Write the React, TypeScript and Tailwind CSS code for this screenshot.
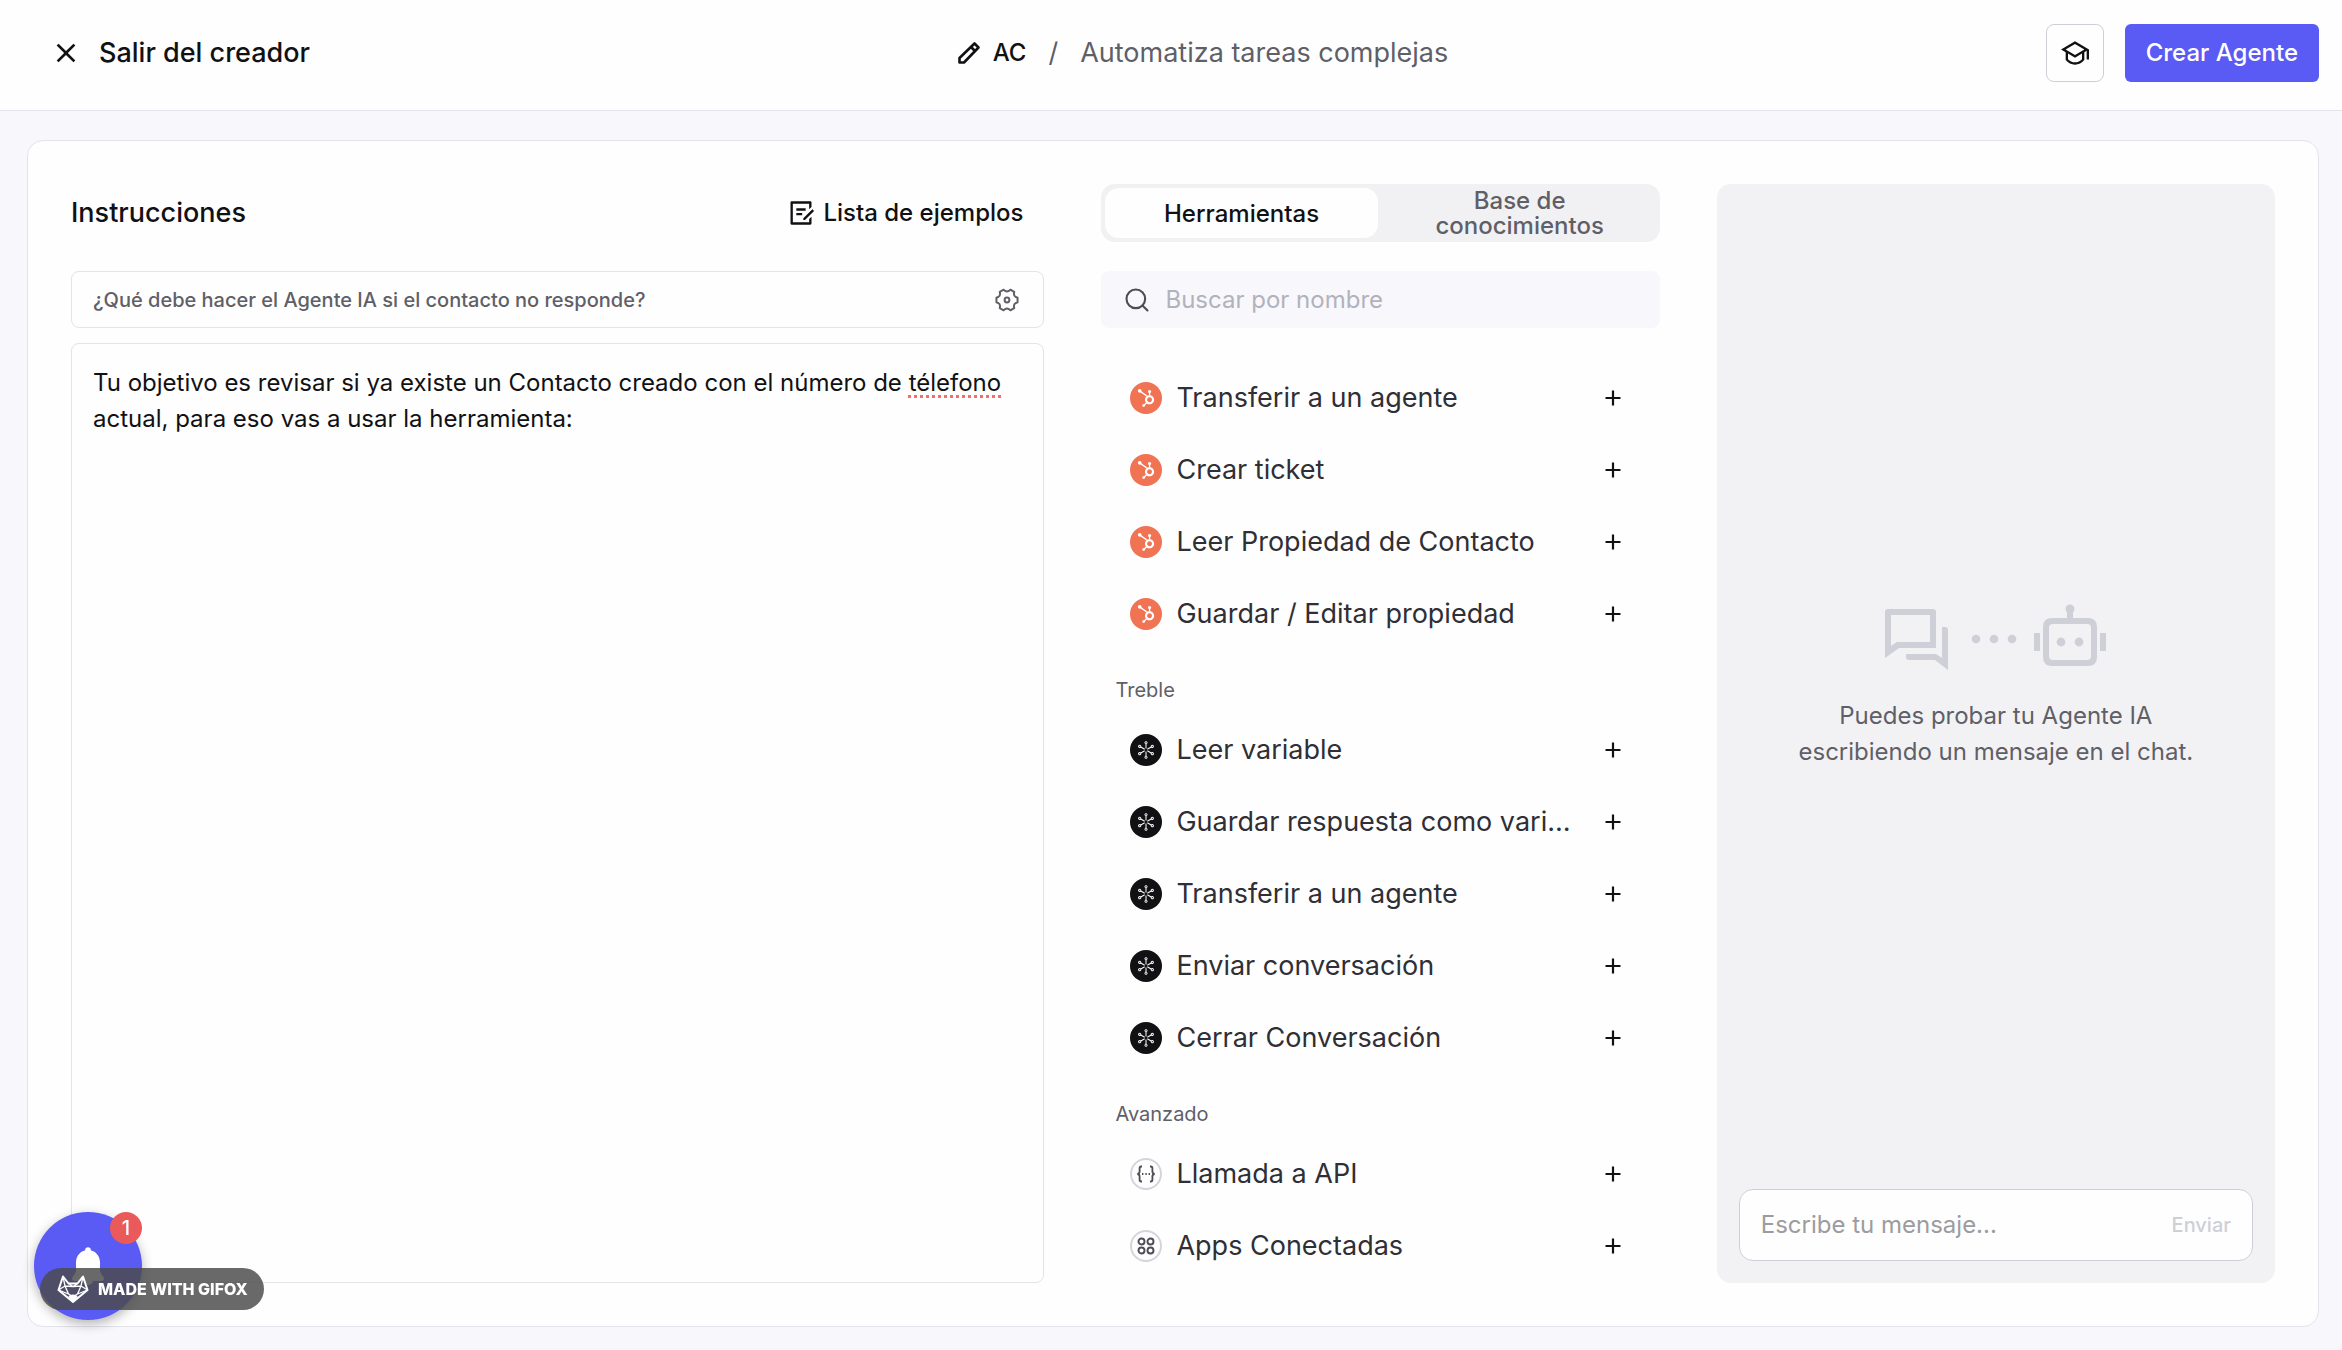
import { useState } from "react";
import type { ReactNode } from "react";
import { FaHubspot } from "react-icons/fa";
import { MdClose } from "react-icons/md";
import { RiGraduationCapLine, RiDraftLine } from "react-icons/ri";
import { Search } from "lucide-react";

const polar = (degrees: number, radius: number) => {
  const radians = (degrees * Math.PI) / 180;
  return `${(12 + radius * Math.cos(radians)).toFixed(2)} ${(12 + radius * Math.sin(radians)).toFixed(2)}`;
};

const GEAR_PATH =
  [0, 60, 120, 180, 240, 300]
    .map(
      (angle, index) =>
        `${index === 0 ? "M" : "L"}${polar(angle - 12, 10.8)}L${polar(angle + 12, 10.8)}L${polar(angle + 19, 9.2)}Q${polar(angle + 30, 8)} ${polar(angle + 41, 9.2)}`,
    )
    .join("") + "Z";

function GearIcon() {
  return (
    <svg viewBox="0 0 24 24" className="size-6" fill="none" stroke="currentColor" strokeWidth="2" strokeLinejoin="round">
      <path d={GEAR_PATH} />
      <circle cx="12" cy="12" r="2.4" />
    </svg>
  );
}

function PencilIcon() {
  return (
    <svg viewBox="0 0 24 24" className="size-6" fill="none" stroke="currentColor" strokeWidth="2.6" strokeLinejoin="round">
      <path d="M2.500 21.500V17L17.500 2.500L21.500 6.500L7 21.500Z" />
      <path d="M14 6L18 10" />
    </svg>
  );
}

function HubspotBadge() {
  return (
    <span className="flex size-8 shrink-0 items-center justify-center rounded-full bg-[#f07354] text-white">
      <FaHubspot className="size-[18px]" />
    </span>
  );
}

function TrebleBadge() {
  return (
    <span className="flex size-8 shrink-0 items-center justify-center rounded-full bg-[#111114] text-white">
      <svg viewBox="0 0 32 32" className="size-8" fill="none" stroke="currentColor" strokeWidth="1">
        {[0, 60, 120, 180, 240, 300].map((angle) => (
          <g key={angle} transform={`rotate(${angle} 16 16)`}>
            <path d="M16 14.5V10" />
            <circle cx="16" cy="8.7" r="1.1" />
          </g>
        ))}
      </svg>
    </span>
  );
}

function ApiBadge() {
  return (
    <span className="flex size-8 shrink-0 items-center justify-center rounded-full border-2 border-[#d4d4dc] text-[#4c4c55]">
      <svg viewBox="0 0 20 18" className="h-[18px] w-5" fill="none" stroke="currentColor" strokeWidth="1.8">
        <path d="M6 1.5H5.2Q3.6 1.5 3.6 3.2V6.6Q3.6 8.6 1.4 9Q3.6 9.4 3.6 11.4V14.8Q3.6 16.5 5.2 16.5H6" />
        <path d="M14 1.5H14.8Q16.4 1.5 16.4 3.2V6.6Q16.4 8.6 18.6 9Q16.4 9.4 16.4 11.4V14.8Q16.4 16.5 14.8 16.5H14" />
        <path d="M6 9H14" strokeDasharray="1.4 1.9" />
      </svg>
    </span>
  );
}

function AppsBadge() {
  return (
    <span className="flex size-8 shrink-0 items-center justify-center rounded-full border-2 border-[#d4d4dc] text-[#4c4c55]">
      <svg viewBox="0 0 18 18" className="size-[18px]" fill="none" stroke="currentColor" strokeWidth="1.9">
        <circle cx="4.5" cy="4.5" r="3" />
        <circle cx="13.5" cy="4.5" r="3" />
        <circle cx="4.5" cy="13.5" r="3" />
        <circle cx="13.5" cy="13.5" r="3" />
      </svg>
    </span>
  );
}

function ChatToBotIllustration() {
  return (
    <svg viewBox="0 0 222 66" className="h-[66px] w-[222px] text-[#cfcfd8]" fill="currentColor">
      <path
        fillRule="evenodd"
        d="M3 5H48Q51 5 51 8V44H14L0 54V8Q0 5 3 5ZM6 11V42L12 38H45V11Z"
      />
      <path d="M57 23H60Q63 23 63 26V66L50 56H24Q21 56 21 53V50H51L57 54Z" />
      <circle cx="91" cy="35" r="4.3" />
      <circle cx="109" cy="35" r="4.3" />
      <circle cx="127" cy="35" r="4.3" />
      <circle cx="185" cy="5" r="4.5" />
      <rect x="182" y="6" width="6" height="10" />
      <path
        fillRule="evenodd"
        d="M167 14H203Q212 14 212 23V53Q212 62 203 62H167Q158 62 158 53V23Q158 14 167 14ZM168 20Q164 20 164 24V52Q164 56 168 56H202Q206 56 206 52V24Q206 20 202 20Z"
      />
      <circle cx="176" cy="38" r="4.4" />
      <circle cx="194" cy="38" r="4.4" />
      <rect x="149" y="29" width="6" height="18" />
      <rect x="215" y="29" width="6" height="18" />
    </svg>
  );
}

function BellIcon() {
  return (
    <svg viewBox="0 0 34 38" className="h-[38px] w-[34px]" fill="currentColor">
      <circle cx="17" cy="3" r="2.8" />
      <path d="M17 3C24 3 29 8.500 29 15.500V24Q29.500 27 32.500 30Q34 33.500 30.500 34H3.500Q0 33.500 1.500 30Q4.500 27 5 24V15.500C5 8.500 10 3 17 3Z" />
      <path d="M12 34H22Q21 38 17 38Q13 38 12 34Z" />
    </svg>
  );
}

function FoxIcon() {
  return (
    <svg viewBox="0 0 32 28" className="h-7 w-8" fill="none" stroke="currentColor" strokeWidth="2" strokeLinejoin="round">
      <path d="M6 1.500L11.500 8.500H20.500L26 1.500L30.500 15L16 27L1.500 15Z" />
      <path d="M11.500 8.500L16 11.500L20.500 8.500M6 1.500L8 11L1.500 15L11.500 19L8 11L16 11.500L24 11L20.500 19L30.500 15L24 11L26 1.500M11.500 19L16 21.500L20.500 19" strokeWidth="1.300" />
      <path d="M12.500 21.500L16 20.500L19.500 21.500L16 26Z" fill="currentColor" />
    </svg>
  );
}

type Tool = { name: string; badge: ReactNode };
type ToolGroup = { title?: string; tools: Tool[] };

const GROUPS: ToolGroup[] = [
  {
    tools: ["Transferir a un agente", "Crear ticket", "Leer Propiedad de Contacto", "Guardar / Editar propiedad"].map(
      (name) => ({ name, badge: <HubspotBadge /> }),
    ),
  },
  {
    title: "Treble",
    tools: [
      "Leer variable",
      "Guardar respuesta como variable",
      "Transferir a un agente",
      "Enviar conversación",
      "Cerrar Conversación",
    ].map((name) => ({ name, badge: <TrebleBadge /> })),
  },
  {
    title: "Avanzado",
    tools: [
      { name: "Llamada a API", badge: <ApiBadge /> },
      { name: "Apps Conectadas", badge: <AppsBadge /> },
    ],
  },
];

function ToolRow({ name, badge }: Tool) {
  return (
    <li className="flex h-[72px] items-center pr-[35px] pl-[29px]">
      {badge}
      <span className="ml-[14px] min-w-0 flex-1 truncate text-[27px] text-[#2f2f35]">{name}</span>
      <button type="button" aria-label={`Agregar ${name}`} className="ml-5 flex size-6 items-center justify-center text-[#111114]">
        <svg viewBox="0 0 16 16" className="size-4" stroke="currentColor" strokeWidth="2.2">
          <path d="M8 0.500V15.500M0.500 8H15.500" />
        </svg>
      </button>
    </li>
  );
}

function Header() {
  return (
    <header className="grid h-[111px] grid-cols-[1fr_auto_1fr] items-center border-b border-[#e3e3ec] bg-[#fefefe] pr-[23px] pb-1 pl-[50px]">
      <button type="button" className="flex items-center gap-[17px] justify-self-start text-[27px] font-medium text-[#111114]">
        <MdClose className="size-8" />
        Salir del creador
      </button>
      <div className="flex items-center pl-9 text-[27px] text-[#5f5f68]">
        <button type="button" className="flex items-center gap-3 text-2xl font-medium text-[#111114]">
          <PencilIcon />
          AC
        </button>
        <span className="mx-[22px]">/</span>
        <span>Automatiza tareas complejas</span>
      </div>
      <div className="flex items-center gap-[21px] justify-self-end">
        <button
          type="button"
          aria-label="Tutoriales"
          className="flex size-[58px] items-center justify-center rounded-lg border border-[#cfcfd8] text-[#111114]"
        >
          <RiGraduationCapLine className="size-7" />
        </button>
        <button type="button" className="h-[58px] rounded-md bg-[#5a5af5] px-[21px] text-2xl font-medium text-white">
          Crear Agente
        </button>
      </div>
    </header>
  );
}

function Instructions() {
  return (
    <section className="flex min-w-0 flex-col">
      <div className="flex h-[58px] items-center justify-between pr-[21px] text-[#111114]">
        <h2 className="text-[27px] font-medium">Instrucciones</h2>
        <button type="button" className="flex items-center gap-2 text-2xl font-medium">
          <RiDraftLine className="size-7" />
          Lista de ejemplos
        </button>
      </div>
      <div className="mt-[29px] flex h-[57px] items-center justify-between rounded-lg border border-[#e3e3e8] pr-6 pl-[21px] text-[#5f5f68]">
        <span className="truncate text-xl font-medium">¿Qué debe hacer el Agente IA si el contacto no responde?</span>
        <button type="button" aria-label="Configuración">
          <GearIcon />
        </button>
      </div>
      <div
        role="textbox"
        aria-multiline="true"
        aria-label="Instrucciones"
        contentEditable
        suppressContentEditableWarning
        spellCheck={false}
        className="mt-[15px] flex-1 rounded-lg border border-[#e3e3e8] px-[21px] py-[21px] text-2xl/9 text-[#111114] outline-none"
      >
        Tu objetivo es revisar si ya existe un Contacto creado con el número de{" "}
        <span className="underline decoration-[#f07070] decoration-dotted decoration-[3px] underline-offset-4">télefono</span>{" "}
        actual, para eso vas a usar la herramienta:
      </div>
    </section>
  );
}

function Tools() {
  const [query, setQuery] = useState("");
  return (
    <section className="flex min-w-0 flex-col">
      <div role="tablist" className="grid h-[58px] grid-cols-2 gap-1.5 rounded-[14px] bg-[#f1f1f4] p-1 text-2xl/[25px] font-medium">
        <button type="button" role="tab" aria-selected="true" className="rounded-[14px] bg-[#fefefe] text-[#111114]">
          Herramientas
        </button>
        <button type="button" role="tab" aria-selected="false" className="-my-1 px-12 text-[#5f5f68]">
          Base de conocimientos
        </button>
      </div>
      <div className="mt-[29px] flex h-[57px] items-center rounded-lg bg-[#f8f8fc] px-[22px] text-[#4c4c55]">
        <Search className="size-7" strokeWidth={1.8} />
        <input
          type="text"
          aria-label="Buscar por nombre"
          value={query}
          onChange={(event) => setQuery(event.target.value)}
          placeholder="Buscar por nombre"
          className="ml-[14px] min-w-0 flex-1 bg-transparent text-2xl outline-none placeholder:text-[#b2b2bc]"
        />
      </div>
      <div className="mt-[34px]">
        {GROUPS.map((group, index) => (
          <div key={index}>
            {group.title && (
              <h3 className="flex h-16 items-center pt-4 pl-[14px] text-xl text-[#5f5f68]">{group.title}</h3>
            )}
            <ul>
              {group.tools.map((tool) => (
                <ToolRow key={tool.name} {...tool} />
              ))}
            </ul>
          </div>
        ))}
      </div>
    </section>
  );
}

function ChatPreview() {
  const [message, setMessage] = useState("");
  return (
    <section className="flex min-w-0 flex-col rounded-[14px] bg-[#f2f2f5] p-[22px]">
      <div className="flex flex-1 flex-col items-center justify-center pb-[22px]">
        <ChatToBotIllustration />
        <p className="mt-7 text-center text-2xl/9 text-[#5f5f68]">
          Puedes probar tu Agente IA
          <br />
          escribiendo un mensaje en el chat.
        </p>
      </div>
      <form
        onSubmit={(event) => event.preventDefault()}
        className="flex h-[72px] items-center rounded-[14px] border border-[#cfcfd8] bg-[#fefefe] px-[21px]"
      >
        <input
          type="text"
          aria-label="Escribe tu mensaje"
          value={message}
          onChange={(event) => setMessage(event.target.value)}
          placeholder="Escribe tu mensaje..."
          className="min-w-0 flex-1 bg-transparent text-2xl outline-none placeholder:text-[#9c9ca0]"
        />
        <button type="submit" className="text-xl font-medium text-[#cfcfd8]">
          Enviar
        </button>
      </form>
    </section>
  );
}

export default function App() {
  return (
    <div className="flex min-h-screen flex-col bg-[#f8f8fc] font-['Inter',sans-serif]">
      <Header />
      <main className="mt-[29px] mr-[23px] mb-[23px] ml-[27px] grid flex-1 grid-cols-[973fr_558fr_558fr] gap-[57px] rounded-2xl border border-[#e3e3ec] bg-[#fefefe] p-[43px]">
        <Instructions />
        <Tools />
        <ChatPreview />
      </main>
      <button
        type="button"
        aria-label="Notificaciones"
        className="fixed bottom-[30px] left-[34px] flex size-[108px] items-center justify-center rounded-full bg-[#5a5af5] text-white shadow-[0_4px_12px_rgba(0,0,0,0.3)]"
      >
        <BellIcon />
        <span className="absolute top-0 right-0 flex size-8 items-center justify-center rounded-full bg-[#ea5a5a] text-xl font-medium">
          1
        </span>
      </button>
      <div className="fixed bottom-10 left-10 flex h-[42px] items-center gap-[9px] rounded-full bg-[#4b4b4b]/83 pr-4 pl-[17px] text-base font-extrabold text-white">
        <FoxIcon />
        MADE WITH GIFOX
      </div>
    </div>
  );
}
